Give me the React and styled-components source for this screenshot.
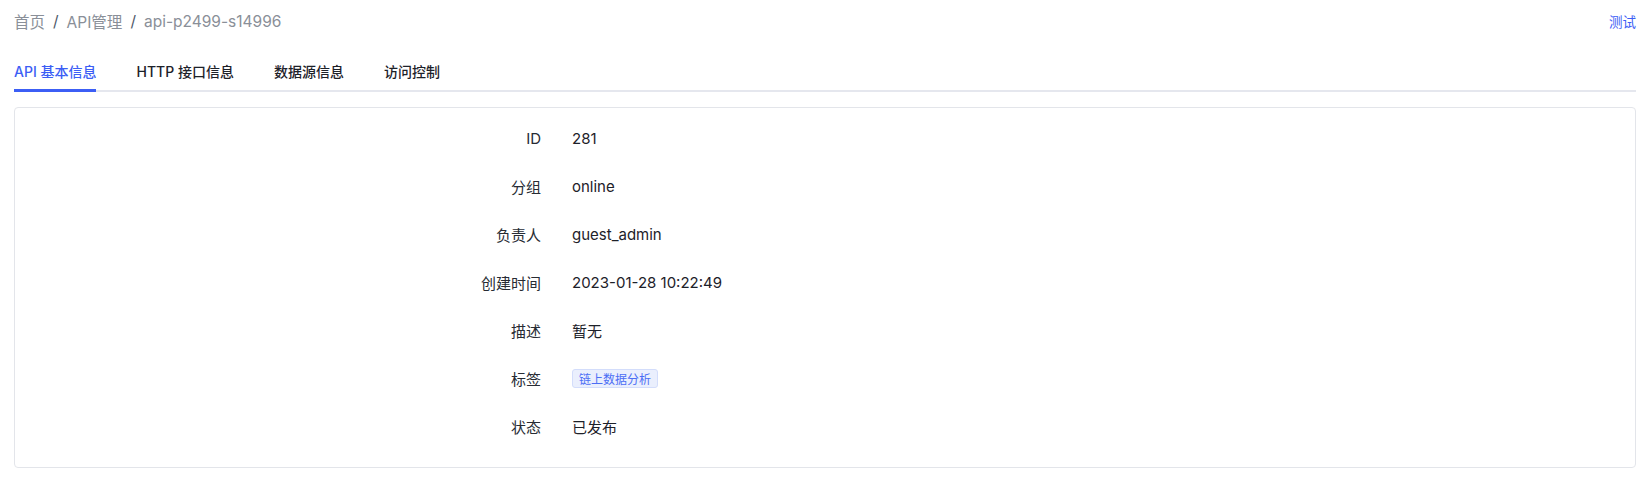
import { createGlobalStyle, styled } from 'styled-components';

const GlobalStyle = createGlobalStyle`
  body {
    margin: 0;
    background: #ffffff;
    font-family: Inter, "Noto Sans CJK SC", sans-serif;
    color: #1d2129;
  }
`;

const Page = styled.div`
  padding: 0 12px 0 14px;
`;

const Header = styled.div`
  display: flex;
  align-items: center;
  justify-content: space-between;
  height: 42px;
`;

const Breadcrumb = styled.div`
  display: flex;
  align-items: center;
  gap: 8px;
  font-size: 15.5px;
  color: #8a8f98;
`;

const Sep = styled.span`
  color: #4e5969;
`;

const TestLink = styled.a`
  font-size: 13.5px;
  color: #3c5ef5;
  cursor: pointer;
`;

const Tabs = styled.div`
  display: flex;
  gap: 40px;
  margin-top: 11px;
  border-bottom: 2px solid #e5e7ee;
`;

const Tab = styled.div`
  position: relative;
  font-size: 14px;
  font-weight: 500;
  height: 37px;
  line-height: 37px;
  color: ${(p) => (p.$active ? '#3c5ef5' : '#1d2129')};
  &::after {
    content: '';
    position: absolute;
    left: 0;
    right: 0;
    bottom: -2px;
    height: 3px;
    background: ${(p) => (p.$active ? '#3c5ef5' : 'transparent')};
  }
`;

const Card = styled.div`
  margin-top: 15px;
  border: 1px solid #e3e5ea;
  border-radius: 4px;
  padding: 6px 0 17px;
`;

const Row = styled.div`
  display: grid;
  grid-template-columns: 526px 1fr;
  column-gap: 31px;
  align-items: center;
  height: 48px;
  font-size: 15px;
`;

const Label = styled.div`
  text-align: right;
  color: #272b33;
`;

const Value = styled.div`
  color: #1d2129;
`;

const Tag = styled.span`
  display: inline-flex;
  align-items: center;
  height: 19px;
  padding: 0 6px;
  font-size: 12px;
  color: #4c6ef5;
  background: #eaeffd;
  border: 1px solid #d3ddfb;
  border-radius: 3px;
  box-sizing: border-box;
`;

const rows = [
  ['ID', '281'],
  ['分组', 'online'],
  ['负责人', 'guest_admin'],
  ['创建时间', '2023-01-28 10:22:49'],
  ['描述', '暂无'],
  ['标签', <Tag key="tag">链上数据分析</Tag>],
  ['状态', '已发布'],
];

const tabs = ['API 基本信息', 'HTTP 接口信息', '数据源信息', '访问控制'];

export default function App() {
  return (
    <Page>
      <GlobalStyle />
      <Header>
        <Breadcrumb>
          <span>首页</span>
          <Sep>/</Sep>
          <span>API管理</span>
          <Sep>/</Sep>
          <span>api-p2499-s14996</span>
        </Breadcrumb>
        <TestLink>测试</TestLink>
      </Header>
      <Tabs>
        {tabs.map((t, i) => (
          <Tab key={t} $active={i === 0}>
            {t}
          </Tab>
        ))}
      </Tabs>
      <Card>
        {rows.map(([label, value]) => (
          <Row key={label}>
            <Label>{label}</Label>
            <Value>{value}</Value>
          </Row>
        ))}
      </Card>
    </Page>
  );
}
